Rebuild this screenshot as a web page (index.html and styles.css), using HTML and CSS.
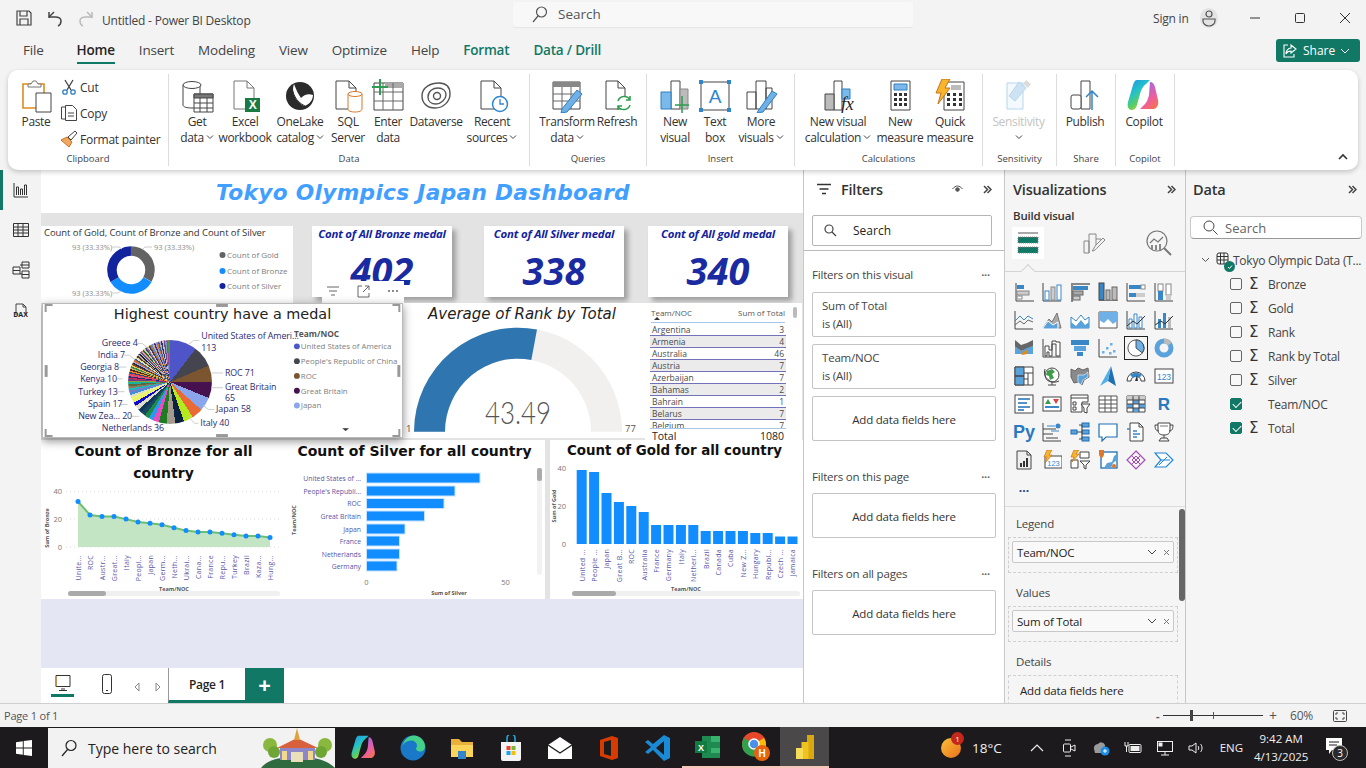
FILE: index.html
```html
<!DOCTYPE html>
<html lang="en">
<head>
  <meta charset="UTF-8">
  <title>Untitled - Power BI Desktop</title>
  <link rel="stylesheet" href="styles.css">
</head>
<body>
<div class="app">

  <header class="titlebar">
    <div class="quick">
      <svg width="18" height="18" viewBox="0 0 18 18" fill="none" stroke="#444" stroke-width="1.2"><path d="M2 2h12l2 2v12H2z"/><path d="M5 2v5h7V2M5 16v-6h8v6"/></svg>
      <svg width="18" height="18" viewBox="0 0 18 18" fill="none" stroke="#444" stroke-width="1.5"><path d="M3 9V3M3 8h6c4 0 6 2 6 4s-1 4-3 5"/><path d="M3 8l5-5" /></svg>
      <svg width="18" height="18" viewBox="0 0 18 18" fill="none" stroke="#bbb" stroke-width="1.5"><path d="M15 9V3M15 8H9c-4 0-6 2-6 4s1 4 3 5"/><path d="M15 8l-5-5"/></svg>
    </div>
    <div class="doc-title">Untitled - Power BI Desktop</div>
    <div class="top-search">
      <svg width="18" height="18" viewBox="0 0 18 18" fill="none" stroke="#555" stroke-width="1.2"><circle cx="10.5" cy="7" r="5"/><path d="M7 11l-5 6"/></svg>
      <span>Search</span>
    </div>
    <div class="signin">Sign in</div>
    <div class="avatar"><svg width="16" height="18" viewBox="0 0 16 18" fill="none" stroke="#555" stroke-width="1.2"><circle cx="8" cy="5" r="3"/><path d="M2 10h12v2a6 5 0 0 1-12 0z"/></svg></div>
    <div class="winctl">
      <svg width="12" height="12" viewBox="0 0 12 12" stroke="#333"><path d="M1 6h10"/></svg>
      <svg width="12" height="12" viewBox="0 0 12 12" fill="none" stroke="#333"><rect x="1.5" y="1.5" width="9" height="9" rx="1"/></svg>
      <svg width="12" height="12" viewBox="0 0 12 12" stroke="#333"><path d="M1 1l10 10M11 1L1 11"/></svg>
    </div>
  </header>

  <nav class="tabs">
    <a class="tab">File</a>
    <a class="tab active">Home</a>
    <a class="tab">Insert</a>
    <a class="tab">Modeling</a>
    <a class="tab">View</a>
    <a class="tab">Optimize</a>
    <a class="tab">Help</a>
    <a class="tab ctx">Format</a>
    <a class="tab ctx">Data / Drill</a>
    <button class="share">
      <svg width="16" height="16" viewBox="0 0 16 16" fill="none" stroke="#fff" stroke-width="1.1"><path d="M6 2H2v12h10v-3"/><path d="M9 2l5 4-5 4V8c-2 0-4 1-5 3 0-3 2-6 5-6z"/></svg>
      Share
      <svg width="10" height="10" viewBox="0 0 10 10" fill="none" stroke="#fff"><path d="M1 3l4 4 4-4"/></svg>
    </button>
  </nav>

  <section class="ribbon">
    <div class="group g-clip">
      <div class="clip-items">
        <div class="rb paste">
          <svg width="34" height="34" viewBox="0 0 34 34"><path d="M4 5h21v24H4z" fill="#fff" stroke="#e08a1e" stroke-width="1.6"/><path d="M9 5h3l2-3h3l2 3h3v3H9z" fill="#fff" stroke="#777"/><path d="M17 14h15v19H17z" fill="#fff" stroke="#444"/></svg>
          <span>Paste</span>
        </div>
        <ul class="clip-list">
          <li><svg width="18" height="18" viewBox="0 0 18 18" fill="none"><path d="M5 2l6 10M13 2L7 12" stroke="#444" stroke-width="1.3"/><circle cx="5" cy="14" r="2.2" stroke="#2f7fc1" stroke-width="1.3"/><circle cx="13" cy="14" r="2.2" stroke="#2f7fc1" stroke-width="1.3"/></svg>Cut</li>
          <li><svg width="18" height="18" viewBox="0 0 18 18" fill="#fff" stroke="#444"><path d="M1.5 3h5v12h-5z"/><path d="M5.500 1.500h7l4 4v11h-11z"/><path d="M8 9h6M8 12h6"/></svg>Copy</li>
          <li><svg width="18" height="18" viewBox="0 0 18 18"><path d="M1 10l6-3 5 5-3 5z" fill="#f0a860" stroke="#c8701e"/><path d="M8 7l7-6 2 2-6 7z" fill="#fff" stroke="#444"/></svg>Format painter</li>
        </ul>
      </div>
      <div class="group-name">Clipboard</div>
    </div>

    <div class="group g-data">
      <div class="items">
        <div class="rb">
          <svg width="34" height="34" viewBox="0 0 34 34" fill="#fff" stroke="#444"><path d="M3 6v20c0 2 4 3 9 3s8-1 8-2V6"/><ellipse cx="12" cy="6" rx="9" ry="3.500"/><path d="M14 15h19v18H14z"/><path d="M14 15h19v4H14z" fill="#777"/><path d="M20 19v14M27 19v14M14 24h19M14 29h19"/></svg>
          <span>Get</span><span>data<svg class="chev" viewBox="0 0 8 8"><path d="M1 2.500l3 3 3-3"/></svg></span>
        </div>
        <div class="rb">
          <svg width="34" height="34" viewBox="0 0 34 34"><path d="M6 2h13l7 7v21H6z" fill="#fff" stroke="#777"/><path d="M19 2v7h7" fill="none" stroke="#777"/><path d="M17 19h15v14H17z" fill="#1a7a43"/><text x="24.500" y="30" class="ico-x">X</text></svg>
          <span>Excel</span><span>workbook</span>
        </div>
        <div class="rb">
          <svg width="34" height="34" viewBox="0 0 34 34"><circle cx="17" cy="17" r="14" fill="#2b2b2b"/><path d="M11 5c-3 8 1 17 10 22 5-1 9-6 9-11-5-2-9 0-12 3-3-4-5-9-7-14z" fill="#fff"/><path d="M9 6c0 8 4 17 13 21" fill="none" stroke="#2b2b2b"/></svg>
          <span>OneLake</span><span>catalog<svg class="chev" viewBox="0 0 8 8"><path d="M1 2.500l3 3 3-3"/></svg></span>
        </div>
        <div class="rb">
          <svg width="34" height="34" viewBox="0 0 34 34"><path d="M5 2h13l7 7v21H5z" fill="#fff" stroke="#444"/><path d="M18 2v7h7" fill="none" stroke="#444"/><path d="M17 15v15c0 2 3 3 7 3s7-1 7-3V15z" fill="#fff" stroke="#d9772a"/><ellipse cx="24" cy="15" rx="7" ry="2.500" fill="#fff" stroke="#d9772a"/></svg>
          <span>SQL</span><span>Server</span>
        </div>
        <div class="rb">
          <svg width="34" height="34" viewBox="0 0 34 34"><path d="M3 4h29v27H3z" fill="#fff" stroke="#444"/><path d="M14 4h18v5H14z" fill="#aaa"/><path d="M12 4v27M22 4v27M3 13h29M3 22h29" stroke="#666" fill="none"/><path d="M9 0v16M1 8h16" stroke="#2f9d4f" stroke-width="2"/></svg>
          <span>Enter</span><span>data</span>
        </div>
        <div class="rb">
          <svg width="34" height="34" viewBox="0 0 34 34" fill="none" stroke="#555" stroke-width="1.400"><path d="M3 17C3 8 12 4 20 4c7 0 11 4 11 11s-6 14-15 14C8 29 3 24 3 17z"/><path d="M9 18c0-6 5-9 10-9s8 3 8 7-5 9-10 9-8-3-8-7z"/><circle cx="18" cy="17" r="3.500"/></svg>
          <span>Dataverse</span>
        </div>
        <div class="rb">
          <svg width="34" height="34" viewBox="0 0 34 34"><path d="M6 2h13l7 7v21H6z" fill="#fff" stroke="#444"/><path d="M19 2v7h7" fill="none" stroke="#444"/><circle cx="25" cy="25" r="7.500" fill="#fff" stroke="#2f86cf" stroke-width="1.500"/><path d="M25 20v5h4" fill="none" stroke="#2f86cf" stroke-width="1.300"/></svg>
          <span>Recent</span><span>sources<svg class="chev" viewBox="0 0 8 8"><path d="M1 2.500l3 3 3-3"/></svg></span>
        </div>
      </div>
      <div class="group-name">Data</div>
    </div>

    <div class="group g-query">
      <div class="items">
        <div class="rb">
          <svg width="34" height="34" viewBox="0 0 34 34"><path d="M3 3h27v27H3z" fill="#fff" stroke="#444"/><path d="M3 3h27v5H3z" fill="#888"/><path d="M12 8v22M21 8v22M3 15h27M3 22h27" stroke="#666" fill="none"/><path d="M12 30L27 11l5 4-15 18-6 1z" fill="#6fb0e6" stroke="#2f7fc1"/></svg>
          <span>Transform</span><span>data<svg class="chev" viewBox="0 0 8 8"><path d="M1 2.500l3 3 3-3"/></svg></span>
        </div>
        <div class="rb">
          <svg width="34" height="34" viewBox="0 0 34 34"><path d="M6 2h12l7 7v21H6z" fill="#fff" stroke="#444"/><path d="M18 2v7h7" fill="none" stroke="#444"/><circle cx="24" cy="24" r="7" fill="#fff" stroke="none"/><path d="M18 22a6.500 6.500 0 0 1 12-1M30 26a6.500 6.500 0 0 1-12 1M30 17v4h-4M18 31v-4h4" fill="none" stroke="#2f9d4f" stroke-width="1.500"/></svg>
          <span>Refresh</span>
        </div>
      </div>
      <div class="group-name">Queries</div>
    </div>

    <div class="group g-insert">
      <div class="items">
        <div class="rb">
          <svg width="34" height="34" viewBox="0 0 34 34"><path d="M13 2h9v28h-9z" fill="#fff" stroke="#444"/><path d="M3 13h10v17H3z" fill="#7db8ea" stroke="#2f7fc1"/><path d="M22 10h8v20h-8z" fill="#bbb" stroke="#888"/><path d="M24 17v17M17 26h14" stroke="#2f9d4f" stroke-width="1.500"/></svg>
          <span>New</span><span>visual</span>
        </div>
        <div class="rb">
          <svg width="34" height="34" viewBox="0 0 34 34"><path d="M3 3h28v28H3z" fill="#fff" stroke="#444"/><g fill="#2f86cf"><rect x="1" y="1" width="4" height="4"/><rect x="29" y="1" width="4" height="4"/><rect x="1" y="29" width="4" height="4"/><rect x="29" y="29" width="4" height="4"/></g><text x="17" y="24" class="ico-a">A</text></svg>
          <span>Text</span><span>box</span>
        </div>
        <div class="rb">
          <svg width="34" height="34" viewBox="0 0 34 34"><path d="M12 2h10v28H12zM3 13h9v17H3zM22 9h6v21h-6z" fill="#fff" stroke="#444"/><path d="M14 32l14-20 5 3-14 18-6 1z" fill="#6fb0e6" stroke="#2f7fc1"/></svg>
          <span>More</span><span>visuals<svg class="chev" viewBox="0 0 8 8"><path d="M1 2.500l3 3 3-3"/></svg></span>
        </div>
      </div>
      <div class="group-name">Insert</div>
    </div>

    <div class="group g-calc">
      <div class="items">
        <div class="rb">
          <svg width="34" height="34" viewBox="0 0 34 34"><path d="M13 2h8v29h-8z" fill="#fff" stroke="#444"/><path d="M21 10h8v10h-8z" fill="#7db8ea" stroke="#2f7fc1"/><path d="M4 15h9v16H4z" fill="#bbb" stroke="#444"/><text x="20" y="31" class="ico-fx">fx</text></svg>
          <span>New visual</span><span>calculation<svg class="chev" viewBox="0 0 8 8"><path d="M1 2.500l3 3 3-3"/></svg></span>
        </div>
        <div class="rb">
          <svg width="34" height="34" viewBox="0 0 34 34"><path d="M8 2h19v29H8z" fill="#fff" stroke="#444"/><path d="M11 5h13v6H11z" fill="#7db8ea" stroke="#2f7fc1"/><g fill="#333"><rect x="11" y="14" width="3" height="3"/><rect x="16" y="14" width="3" height="3"/><rect x="21" y="14" width="3" height="3"/><rect x="11" y="19" width="3" height="3"/><rect x="16" y="19" width="3" height="3"/><rect x="21" y="19" width="3" height="3"/><rect x="11" y="24" width="3" height="3"/><rect x="16" y="24" width="3" height="3"/><rect x="21" y="24" width="3" height="3"/></g></svg>
          <span>New</span><span>measure</span>
        </div>
        <div class="rb">
          <svg width="34" height="34" viewBox="0 0 34 34"><path d="M11 3h20v28H11z" fill="#fff" stroke="#444"/><path d="M18 6h10v5H18z" fill="#bbb"/><g fill="#333"><rect x="14" y="14" width="3" height="3"/><rect x="20" y="14" width="3" height="3"/><rect x="26" y="14" width="3" height="3"/><rect x="14" y="19" width="3" height="3"/><rect x="20" y="19" width="3" height="3"/><rect x="26" y="19" width="3" height="3"/><rect x="14" y="24" width="3" height="3"/><rect x="20" y="24" width="3" height="3"/><rect x="26" y="24" width="3" height="3"/></g><path d="M9 0h8l-5 9h5L5 25l3-11H3z" fill="#f7b52b" stroke="#c8701e"/></svg>
          <span>Quick</span><span>measure</span>
        </div>
      </div>
      <div class="group-name">Calculations</div>
    </div>

    <div class="group g-sens">
      <div class="items">
        <div class="rb off">
          <svg width="34" height="34" viewBox="0 0 34 34"><path d="M6 4h16v26H6z" fill="#f4f9fd" stroke="#b5d6ee"/><path d="M18 3l7 6-11 13-6-5z" fill="#cde3f3" stroke="#b5d6ee"/><path d="M25 1l5 4-3 4-5-4z" fill="#dcdcdc"/></svg>
          <span>Sensitivity</span><span><svg class="chev" viewBox="0 0 8 8"><path d="M1 2.500l3 3 3-3"/></svg></span>
        </div>
      </div>
      <div class="group-name">Sensitivity</div>
    </div>

    <div class="group g-share">
      <div class="items">
        <div class="rb">
          <svg width="34" height="34" viewBox="0 0 34 34"><path d="M13 2h9v28h-9z" fill="#fff" stroke="#444"/><rect x="3" y="16" width="10" height="14" rx="2" fill="#fff" stroke="#444"/><path d="M24 31V12M18 18l6-6 6 6" fill="none" stroke="#2f86cf" stroke-width="1.500"/></svg>
          <span>Publish</span>
        </div>
      </div>
      <div class="group-name">Share</div>
    </div>

    <div class="group g-copilot">
      <div class="items">
        <div class="rb">
          <svg width="34" height="34" viewBox="0 0 34 34"><defs><linearGradient id="cp1" x1="0" y1="0" x2=".6" y2="1"><stop offset="0" stop-color="#1f8fe8"/><stop offset=".45" stop-color="#25c2c8"/><stop offset=".75" stop-color="#5fcf5a"/><stop offset="1" stop-color="#f7d046"/></linearGradient><linearGradient id="cp2" x1=".4" y1="0" x2="1" y2="1"><stop offset="0" stop-color="#9a6be8"/><stop offset=".55" stop-color="#ee5e9c"/><stop offset="1" stop-color="#f77a3a"/></linearGradient></defs><path d="M10 1h13l-4 4c-3 2-5 6-6 10l-3 11c-1 4-3 5-6 5-3-1-4-4-3-8L6 6c1-3 2-5 4-5z" fill="url(#cp1)"/><path d="M23 3c3 0 4 2 5 5l3 13c1 5-1 8-4 9H13l5-5c2-2 3-5 4-9z" fill="url(#cp2)"/></svg>
          <span>Copilot</span>
        </div>
      </div>
      <div class="group-name">Copilot</div>
    </div>
    <svg class="collapse" width="10" height="8" viewBox="0 0 10 8" fill="none" stroke="#333" stroke-width="1.600"><path d="M1 6l4-4 4 4"/></svg>
  </section>

  <div class="workspace">
    <aside class="rail">
      <div class="rail-item current"><svg width="16" height="16" viewBox="0 0 16 16" fill="none" stroke="#333"><path d="M1 1v14h14M3.500 13V5h2v8M7.500 13V7h2v6M11.500 13V3h2v10"/></svg></div>
      <div class="rail-item"><svg width="18" height="16" viewBox="0 0 18 16" fill="none" stroke="#333"><path d="M1.500 1.500h15v13h-15zM1.500 5h15M1.500 8h15M1.500 11h15M6 1.500v13M11 1.500v13"/></svg></div>
      <div class="rail-item"><svg width="18" height="18" viewBox="0 0 18 18" fill="none" stroke="#333"><path d="M1 6h7v7H1zM1 9.500h7M10 1h7v6h-7zM10 4h7M10 10h7v7h-7zM10 13.500h7M8 4h2M8 13h2"/></svg></div>
      <div class="rail-item dax"><svg width="18" height="14" viewBox="0 0 18 14" fill="none" stroke="#444"><path d="M4 12V1h7l3 3v8"/><path d="M11 1v3h3"/></svg><span>DAX</span></div>
    </aside>

    <div class="report">
      <div class="canvas">
        <div class="v-band"></div>
        <div class="v-title">Tokyo Olympics Japan Dashboard</div>

        <div class="visual v-donut">
          <div class="v-donut-title">Count of Gold, Count of Bronze and Count of Silver</div>
          <svg class="fill-svg" viewBox="41 226 252 77">
            <circle cx="131" cy="270" r="19" fill="none" stroke="#636363" stroke-width="9.500" pathLength="360" stroke-dasharray="120 360" transform="rotate(-90 131 270)"/>
            <circle cx="131" cy="270" r="19" fill="none" stroke="#118dff" stroke-width="9.500" pathLength="360" stroke-dasharray="120 360" transform="rotate(30 131 270)"/>
            <circle cx="131" cy="270" r="19" fill="none" stroke="#12239e" stroke-width="9.500" pathLength="360" stroke-dasharray="120 360" transform="rotate(150 131 270)"/>
            <g class="t-lab"><text x="72" y="250">93 (33.33%)</text><text x="154" y="250">93 (33.33%)</text><text x="72" y="296">93 (33.33%)</text></g>
            <path d="M111 247h8l3 2M143 249l2-2h7M111 293h7l3-2" fill="none" stroke="#ccc"/>
            <circle cx="222.500" cy="255" r="3" fill="#636363"/><circle cx="222.500" cy="271" r="3" fill="#118dff"/><circle cx="222.500" cy="286" r="3" fill="#12239e"/>
            <g class="t-leg"><text x="227" y="258">Count of Gold</text><text x="227" y="274">Count of Bronze</text><text x="227" y="289">Count of Silver</text></g>
          </svg>
        </div>

        <div class="visual kpi k-bronze"><div class="kpi-title">Cont of All Bronze medal</div><div class="kpi-num">402</div></div>
        <div class="visual kpi k-silver"><div class="kpi-title">Cont of All Silver medal</div><div class="kpi-num">338</div></div>
        <div class="visual kpi k-gold"><div class="kpi-title">Cont of All gold medal</div><div class="kpi-num">340</div></div>

        <div class="vis-head">
          <svg width="14" height="10" viewBox="0 0 14 10" stroke="#666"><path d="M1 1h12M3 5h8M5 9h4"/></svg>
          <svg width="13" height="13" viewBox="0 0 13 13" fill="none" stroke="#666"><path d="M5 1H1v11h11V8M8 1h4v4M12 1L6 7"/></svg>
          <svg width="12" height="4" viewBox="0 0 12 4" fill="#666"><circle cx="2" cy="2" r="1"/><circle cx="6" cy="2" r="1"/><circle cx="10" cy="2" r="1"/></svg>
        </div>

        <div class="visual v-gauge">
          <div class="gauge-title">Average of Rank by Total</div>
          <svg class="fill-svg" viewBox="403 303 242 135">
            <path d="M414 431.700A104 104 0 0 1 622 431.700H591A73 73 0 0 0 445 431.700z" fill="#f1f0ef"/>
            <path d="M414 431.700A104 104 0 0 1 537 329.500L531.300 359.900A73 73 0 0 0 445 431.700z" fill="#2f75b0"/>
            <text x="518" y="424" textLength="66" lengthAdjust="spacingAndGlyphs" class="t-gauge">43.49</text>
            <text x="406" y="432" class="t-g-min">1</text>
            <text x="625" y="432" class="t-g-min">77</text>
          </svg>
        </div>

        <div class="visual v-table">
          <div class="tb-head"><span>Team/NOC</span><span>Sum of Total</span><i class="tb-sort"></i></div>
          <div class="tb-body">
            <div class="tb-row"><span>Argentina</span><span>3</span></div>
            <div class="tb-row alt"><span>Armenia</span><span>4</span></div>
            <div class="tb-row"><span>Australia</span><span>46</span></div>
            <div class="tb-row alt"><span>Austria</span><span>7</span></div>
            <div class="tb-row"><span>Azerbaijan</span><span>7</span></div>
            <div class="tb-row alt"><span>Bahamas</span><span>2</span></div>
            <div class="tb-row"><span>Bahrain</span><span>1</span></div>
            <div class="tb-row alt"><span>Belarus</span><span>7</span></div>
            <div class="tb-row"><span>Belgium</span><span>7</span></div>
          </div>
          <div class="tb-total"><span>Total</span><span>1080</span></div>
          <i class="tb-scroll"></i>
        </div>

        <div class="visual v-pie">
          <div class="pie-title">Highest country have a medal</div>
          <div class="pie"></div>
          <svg class="fill-svg" viewBox="42 303 361 135">
            <path d="M199 340h-6l-5 4M223 373h-11M223 388h-12M214 410h-6l-5-4M198 424h-4l-6-7M160 428h-4v-5M130 417h8M119 405h7M115 392h8M115 379h6M117 367h8M123 355h5l5 4M136 343h5l6 5" fill="none" stroke="#ccc"/>
            <g class="t-pie">
              <text x="201" y="339">United States of Ameri...</text><text x="201" y="351">113</text>
              <text x="225" y="376">ROC 71</text><text x="225" y="390">Great Britain</text><text x="225" y="401">65</text>
              <text x="216" y="413">Japan 58</text><text x="200" y="427">Italy 40</text><text x="100" y="432">Netherlands 36</text>
              <text x="76" y="420">New Zea... 20</text><text x="86" y="408">Spain 17</text><text x="76" y="395">Turkey 13</text>
              <text x="78" y="382">Kenya 10</text><text x="78" y="370">Georgia 8</text><text x="96" y="358">India 7</text><text x="100" y="346">Greece 4</text>
            </g>
            <text x="295" y="336" class="t-pie-head">Team/NOC</text>
            <circle cx="298" cy="346" r="3" fill="#4e55c8"/><circle cx="298" cy="361" r="3" fill="#44454f"/><circle cx="298" cy="376" r="3" fill="#7a5530"/><circle cx="298" cy="391" r="3" fill="#45114f"/><circle cx="298" cy="406" r="3" fill="#8aa5ec"/>
            <g class="t-leg"><text x="302" y="349">United States of America</text><text x="302" y="364">People's Republic of China</text><text x="302" y="379">ROC</text><text x="302" y="394">Great Britain</text><text x="302" y="409">Japan</text></g>
            <path d="M344 429h7l-3.500 3z" fill="#333"/>
            <g fill="#999"><path d="M42 303h8v2h-6v6h-2zM403 303h-8v2h6v6h2zM42 438h8v-2h-6v-6h-2zM403 438h-8v-2h6v-6h2z"/><rect x="216" y="303" width="12" height="3"/><rect x="216" y="435" width="12" height="3"/><rect x="42" y="365" width="3" height="12"/><rect x="400" y="365" width="3" height="12"/></g>
          </svg>
        </div>

        <div class="visual v-bronze">
          <div class="bt">Count of Bronze for all country</div>
          <svg class="fill-svg" viewBox="41 440 249 159">
            <path d="M66 491.700h216M66 519h216M66 547h216" stroke="#ddd" stroke-dasharray="1 3"/>
            <path d="M78 547V501.500L90 515l12 1.500 12 0 12 2.600 12 2.900 12 1.300 12 1.500 12 3 12 2.800 12 1.300 12 0 12 1.400 12 1.400 12 1.300 12 0 12 1.400V547z" fill="#c4e5c4"/>
            <path d="M78 501.500L90 515l12 1.500 12 0 12 2.600 12 2.900 12 1.300 12 1.500 12 3 12 2.800 12 1.300 12 0 12 1.400 12 1.400 12 1.300 12 0 12 1.400" fill="none" stroke="#6dbf6d" stroke-width="2"/>
            <g fill="#118dff"><circle cx="78" cy="501.500" r="2.500"/><circle cx="90" cy="515" r="2.500"/><circle cx="102" cy="516.500" r="2.500"/><circle cx="114" cy="516.500" r="2.500"/><circle cx="126" cy="519.100" r="2.500"/><circle cx="138" cy="522" r="2.500"/><circle cx="150" cy="523.300" r="2.500"/><circle cx="162" cy="524.800" r="2.500"/><circle cx="174" cy="527.800" r="2.500"/><circle cx="186" cy="530.600" r="2.500"/><circle cx="198" cy="531.900" r="2.500"/><circle cx="210" cy="531.900" r="2.500"/><circle cx="222" cy="533.300" r="2.500"/><circle cx="234" cy="534.700" r="2.500"/><circle cx="246" cy="536" r="2.500"/><circle cx="258" cy="536" r="2.500"/><circle cx="270" cy="537.400" r="2.500"/></g>
            <g class="t-tick"><text x="62" y="494">40</text><text x="62" y="522">20</text><text x="62" y="550">0</text></g>
            <text transform="rotate(-90 49 528)" x="49" y="528" class="t-axis mid">Sum of Bronze</text>
            <g class="t-cat">
              <text transform="rotate(-90 81 555)" x="81" y="555">Unite...</text><text transform="rotate(-90 93 555)" x="93" y="555">ROC</text><text transform="rotate(-90 105 555)" x="105" y="555">Austr...</text><text transform="rotate(-90 117 555)" x="117" y="555">Great...</text><text transform="rotate(-90 129 555)" x="129" y="555">Italy</text><text transform="rotate(-90 141 555)" x="141" y="555">Peopl...</text><text transform="rotate(-90 153 555)" x="153" y="555">Japan</text><text transform="rotate(-90 165 555)" x="165" y="555">Germ...</text><text transform="rotate(-90 177 555)" x="177" y="555">Neth...</text><text transform="rotate(-90 189 555)" x="189" y="555">Ukrai...</text><text transform="rotate(-90 201 555)" x="201" y="555">Cana...</text><text transform="rotate(-90 213 555)" x="213" y="555">France</text><text transform="rotate(-90 225 555)" x="225" y="555">Repu...</text><text transform="rotate(-90 237 555)" x="237" y="555">Turkey</text><text transform="rotate(-90 249 555)" x="249" y="555">Brazil</text><text transform="rotate(-90 261 555)" x="261" y="555">Kaza...</text><text transform="rotate(-90 273 555)" x="273" y="555">Hung...</text>
            </g>
            <text x="174" y="591" class="t-axis mid">Team/NOC</text>
            <rect x="68" y="591" width="212" height="5" rx="2.500" fill="#f0f0f0"/><rect x="68" y="591" width="38" height="5" rx="2.500" fill="#aaa"/>
          </svg>
        </div>

        <div class="visual v-silver">
          <div class="bt">Count of Silver for all country</div>
          <svg class="fill-svg" viewBox="290 440 255 159">
            <g fill="#118dff" stroke="#c4e2ff"><rect x="366.500" y="473" width="113.500" height="10"/><rect x="366.500" y="486" width="88.500" height="10"/><rect x="366.500" y="498.500" width="77.500" height="10"/><rect x="366.500" y="511" width="58" height="10"/><rect x="366.500" y="524" width="38.500" height="10"/><rect x="366.500" y="536" width="33" height="10"/><rect x="366.500" y="549" width="33" height="10"/><rect x="366.500" y="561" width="30.500" height="10"/></g>
            <g class="t-scat"><text x="361" y="481">United States of ...</text><text x="361" y="494">People's Republi...</text><text x="361" y="506">ROC</text><text x="361" y="519">Great Britain</text><text x="361" y="532">Japan</text><text x="361" y="544">France</text><text x="361" y="557">Netherlands</text><text x="361" y="569">Germany</text></g>
            <text transform="rotate(-90 296 520)" x="296" y="520" class="t-axis mid">Team/NOC</text>
            <text x="366.500" y="585" class="t-tick2">0</text><text x="505.500" y="585" class="t-tick2">50</text>
            <text x="449" y="595" class="t-axis mid">Sum of Silver</text>
            <rect x="537" y="468" width="5" height="107" rx="2" fill="#f2f2f2"/><rect x="537" y="468" width="5" height="13" rx="2" fill="#aaa"/>
          </svg>
        </div>

        <div class="visual v-gold">
          <div class="bt">Count of Gold for all country</div>
          <svg class="fill-svg" viewBox="550 440 253 159">
            <g fill="#118dff"><rect x="576.700" y="470" width="10" height="74"/><rect x="589.100" y="472" width="10" height="72"/><rect x="601.500" y="493" width="10" height="51"/><rect x="613.900" y="502" width="10" height="42"/><rect x="626.300" y="506" width="10" height="38"/><rect x="638.700" y="512" width="10" height="32"/><rect x="651.100" y="525" width="10" height="19"/><rect x="663.500" y="525" width="10" height="19"/><rect x="675.900" y="525" width="10" height="19"/><rect x="688.300" y="525" width="10" height="19"/><rect x="700.700" y="531" width="10" height="13"/><rect x="713.100" y="531" width="10" height="13"/><rect x="725.500" y="531" width="10" height="13"/><rect x="737.900" y="531" width="10" height="13"/><rect x="750.300" y="533" width="10" height="11"/><rect x="762.700" y="533" width="10" height="11"/><rect x="775.100" y="536.500" width="10" height="7.500"/><rect x="787.500" y="536.500" width="10" height="7.500"/></g>
            <g class="t-tick"><text x="566" y="471">40</text><text x="566" y="509">20</text><text x="566" y="547">0</text></g>
            <text transform="rotate(-90 556 506)" x="556" y="506" class="t-axis mid">Sum of Gold</text>
            <g class="t-cat">
              <text transform="rotate(-90 585 549)" x="585" y="549">United ...</text><text transform="rotate(-90 597 549)" x="597" y="549">People ...</text><text transform="rotate(-90 609 549)" x="609" y="549">Japan</text><text transform="rotate(-90 622 549)" x="622" y="549">Great B...</text><text transform="rotate(-90 634 549)" x="634" y="549">ROC</text><text transform="rotate(-90 647 549)" x="647" y="549">Australia</text><text transform="rotate(-90 659 549)" x="659" y="549">France</text><text transform="rotate(-90 671 549)" x="671" y="549">Germany</text><text transform="rotate(-90 684 549)" x="684" y="549">Italy</text><text transform="rotate(-90 696 549)" x="696" y="549">Netherl...</text><text transform="rotate(-90 709 549)" x="709" y="549">Brazil</text><text transform="rotate(-90 721 549)" x="721" y="549">Canada</text><text transform="rotate(-90 733 549)" x="733" y="549">Cuba</text><text transform="rotate(-90 746 549)" x="746" y="549">New Z...</text><text transform="rotate(-90 758 549)" x="758" y="549">Hungary</text><text transform="rotate(-90 771 549)" x="771" y="549">Republ...</text><text transform="rotate(-90 783 549)" x="783" y="549">Czech ...</text><text transform="rotate(-90 795 549)" x="795" y="549">Jamaica</text>
            </g>
            <text x="686" y="591" class="t-axis mid">Team/NOC</text>
            <rect x="572" y="591" width="228" height="5" rx="2.500" fill="#f0f0f0"/><rect x="572" y="591" width="44" height="5" rx="2.500" fill="#aaa"/>
          </svg>
        </div>
      </div>

      <div class="pagebar">
        <div class="pb-view">
          <svg width="18" height="18" viewBox="0 0 18 18" fill="none" stroke="#333"><path d="M2 1.500h14v11H2z"/><path d="M2 12.500V2" stroke="#e08a1e"/><path d="M7 15h4M5 16.500h8"/></svg>
        </div>
        <div class="pb-phone"><svg width="12" height="20" viewBox="0 0 12 20" fill="none" stroke="#333"><rect x="1.500" y=".5" width="9" height="19" rx="2"/><path d="M5 16.500h2"/></svg></div>
        <svg class="pb-arrow" width="6" height="10" viewBox="0 0 6 10" fill="none" stroke="#888"><path d="M5 1L1 5l4 4z"/></svg>
        <svg class="pb-arrow2" width="6" height="10" viewBox="0 0 6 10" fill="none" stroke="#888"><path d="M1 1l4 4-4 4z"/></svg>
        <div class="pb-tab">Page 1</div>
        <div class="pb-add">+</div>
      </div>
    </div>

    <aside class="filters">
      <div class="panel-head">
        <svg class="fl-ico" width="14" height="12" viewBox="0 0 14 12" stroke="#333" stroke-width="1.300"><path d="M0 1.500h14M2.500 6h9M5 10.500h4"/></svg>
        <span class="panel-title">Filters</span>
        <svg class="fl-eye" width="11" height="8" viewBox="0 0 11 8" fill="none" stroke="#555"><path d="M.5 4c3-4 7-4 10 0"/><circle cx="5.500" cy="4.500" r="1.800" fill="#555"/></svg>
        <svg class="dbl" width="9" height="9" viewBox="0 0 9 9" fill="none" stroke="#444" stroke-width="1.500"><path d="M1 1l3.500 3.500L1 8M4.500 1L8 4.500 4.500 8"/></svg>
      </div>
      <div class="fl-search">
        <svg width="13" height="13" viewBox="0 0 13 13" fill="none" stroke="#444" stroke-width="1.200"><circle cx="5" cy="5" r="4"/><path d="M8 8l4 4"/></svg>
        <span>Search</span>
      </div>
      <div class="fl-line"></div>
      <div class="fl-sec first"><span>Filters on this visual</span><b>...</b></div>
      <div class="fl-card"><div>Sum of Total</div><div>is (All)</div></div>
      <div class="fl-card"><div>Team/NOC</div><div>is (All)</div></div>
      <div class="fl-card add">Add data fields here</div>
      <div class="fl-sec"><span>Filters on this page</span><b>...</b></div>
      <div class="fl-card add">Add data fields here</div>
      <div class="fl-sec"><span>Filters on all pages</span><b>...</b></div>
      <div class="fl-card add">Add data fields here</div>
    </aside>

    <aside class="viz">
      <div class="panel-head">
        <span class="panel-title">Visualizations</span>
        <svg class="dbl" width="9" height="9" viewBox="0 0 9 9" fill="none" stroke="#444" stroke-width="1.500"><path d="M1 1l3.500 3.500L1 8M4.500 1L8 4.500 4.500 8"/></svg>
      </div>
      <div class="build">Build visual</div>
      <div class="viz-tabs">
        <div class="vt on"><svg width="24" height="24" viewBox="0 0 24 24"><path d="M2 2h20" stroke="#555"/><rect x="2" y="6" width="20" height="6" fill="#117865" stroke="#888" stroke-dasharray="1 1"/><rect x="2" y="16" width="20" height="6" fill="#117865" stroke="#888" stroke-dasharray="1 1"/></svg></div>
        <div class="vt fmt"><svg width="24" height="24" viewBox="0 0 24 24" fill="#f3f3f3" stroke="#888"><path d="M2 22V10h5v12zM7 22V3h7v12M14 8h5v3"/><path d="M10 20c3 0 4-2 6-4l7-7-2-2-7 7c-2 2-2 4-4 6z"/></svg></div>
        <div class="vt ana"><svg width="26" height="26" viewBox="0 0 26 26" fill="none" stroke="#777" stroke-width="1.200"><circle cx="11" cy="11" r="10"/><path d="M18 18l7 7" stroke-width="2"/><path d="M4 13l4-4 4 3 5-5"/><path d="M6 20v-5M10 20v-5M14 20v-6" stroke="#888" stroke-width="2"/></svg></div>
      </div>
      <div class="viz-line"></div>
      <div class="viz-grid">
        <svg viewBox="0 0 20 20" class="vi"><path d="M2 1v18h18" fill="none" stroke="#444"/><rect x="3" y="3" width="7" height="4" fill="#3a87c8"/><rect x="3" y="9" width="12" height="4" fill="#ccc" stroke="#888"/><rect x="3" y="14" width="5" height="3" fill="#fff" stroke="#888"/></svg>
        <svg viewBox="0 0 20 20" class="vi"><path d="M1 1v18h18" fill="none" stroke="#444"/><rect x="3" y="9" width="4" height="9" fill="#fff" stroke="#3a87c8"/><rect x="9" y="5" width="4" height="13" fill="#ccc" stroke="#888"/><rect x="15" y="3" width="4" height="15" fill="#fff" stroke="#3a87c8"/></svg>
        <svg viewBox="0 0 20 20" class="vi"><path d="M1 1h19v2H3v17H1z" fill="#888"/><rect x="3" y="4" width="15" height="4" fill="#3a87c8"/><rect x="3" y="9" width="10" height="4" fill="#aaa" stroke="#666"/><rect x="3" y="14" width="7" height="4" fill="#ccc" stroke="#666"/></svg>
        <svg viewBox="0 0 20 20" class="vi"><path d="M1 19h19v-1H1z" fill="#888"/><rect x="1" y="1" width="5" height="17" fill="#3a87c8" stroke="#444"/><rect x="8" y="8" width="4" height="10" fill="#bbb" stroke="#666"/><rect x="14" y="5" width="5" height="13" fill="#bbb" stroke="#666"/></svg>
        <svg viewBox="0 0 20 20" class="vi"><path d="M1 1v18h18" fill="none" stroke="#444"/><rect x="3" y="3" width="12" height="4" fill="#3a87c8"/><rect x="15" y="3" width="4" height="4" fill="#fff" stroke="#888"/><rect x="3" y="11" width="7" height="4" fill="#3a87c8"/><rect x="10" y="11" width="9" height="4" fill="#ccc"/></svg>
        <svg viewBox="0 0 20 20" class="vi"><path d="M1 1v18h18" fill="none" stroke="#444"/><rect x="4" y="2" width="5" height="7" fill="#fff" stroke="#888"/><rect x="4" y="9" width="5" height="9" fill="#3a87c8"/><rect x="12" y="2" width="5" height="11" fill="#fff" stroke="#888"/><rect x="12" y="13" width="5" height="5" fill="#ccc"/></svg>

        <svg viewBox="0 0 20 20" class="vi"><path d="M1 1v18h18" fill="none" stroke="#444"/><path d="M1 11l5-5 4 4 4-4 5 3" fill="none" stroke="#3a87c8"/><path d="M1 15l5-4 4 3 4-4 5 2" fill="none" stroke="#666"/></svg>
        <svg viewBox="0 0 20 20" class="vi"><path d="M1 18l6-9 3 3 5-9 4 15z" fill="#aaa" stroke="#777"/><path d="M1 18l5-7 5 4 5-3v7H1z" fill="#5aa2dc" stroke="#fff"/></svg>
        <svg viewBox="0 0 20 20" class="vi"><path d="M1 18V7l5 4 5-6 4 5 4-3v11z" fill="#fff" stroke="#3a87c8"/><path d="M1 18v-6l5 4 5-6 4 5 4-3v6z" fill="#5aa2dc"/></svg>
        <svg viewBox="0 0 20 20" class="vi"><path d="M1 2h18v16H1z" fill="#fff" stroke="#555"/><path d="M1 2h18v9l-4 3-5-5-4 4-5-3z" fill="#6fb0e6"/></svg>
        <svg viewBox="0 0 20 20" class="vi"><path d="M1 1v18h18" fill="none" stroke="#444"/><path d="M3 9h3v9H3zM8 4h3v14H8zM13 7h3v11h-3z" fill="#fff" stroke="#3a87c8"/><path d="M1 16l6-5 4 3 8-8" fill="none" stroke="#333"/></svg>
        <svg viewBox="0 0 20 20" class="vi"><path d="M1 1v18h18" fill="none" stroke="#444"/><path d="M4 9h3v9H4z" fill="#3a87c8"/><path d="M9 3h3v15H9z" fill="#3a87c8"/><path d="M14 7h3v11h-3z" fill="#bbb"/><path d="M1 15l6-4 4 3 8-8" fill="none" stroke="#333"/></svg>

        <svg viewBox="0 0 20 20" class="vi"><path d="M1 2l6 5 6-2 6-3v6l-6 3-6 2-6-4z" fill="#666"/><path d="M1 8l6 5 6-3 6-2v8H1z" fill="#5aa2dc"/><path d="M5 10l3 5 6-4-1 5-5 1z" fill="#e08a1e"/></svg>
        <svg viewBox="0 0 20 20" class="vi"><path d="M1 1v18h18" fill="none" stroke="#444"/><path d="M3 18V8h4v4h3V3h4v1h4v14h-4V6h-4v12H7V14H5v4z" fill="#fff" stroke="#444"/></svg>
        <svg viewBox="0 0 20 20" class="vi"><path d="M1 2h18v5H1z" fill="#3a87c8"/><path d="M4 8h12v5H4z" fill="#5aa2dc"/><path d="M7 14h6v4H7z" fill="#3a87c8"/></svg>
        <svg viewBox="0 0 20 20" class="vi"><path d="M1 1v18h18" fill="none" stroke="#444"/><g fill="#6fb0e6"><rect x="4" y="13" width="2.500" height="2.500"/><rect x="8" y="9" width="2.500" height="2.500"/><rect x="12" y="5" width="2.500" height="2.500"/><rect x="15" y="12" width="2.500" height="2.500"/><rect x="11" y="14" width="2.500" height="2.500"/></g></svg>
        <div class="vi-sel"><svg viewBox="0 0 20 20" class="vi"><circle cx="10" cy="10" r="9" fill="#fff" stroke="#444"/><path d="M10 1a9 9 0 0 1 7 14.500L10 10z" fill="#6fb0e6" stroke="#444"/></svg></div>
        <svg viewBox="0 0 20 20" class="vi"><circle cx="10" cy="10" r="7" fill="none" stroke="#5aa2dc" stroke-width="5"/><path d="M10 3a7 7 0 0 1 6 3" fill="none" stroke="#bbb" stroke-width="5"/></svg>

        <svg viewBox="0 0 20 20" class="vi"><path d="M1 1h18v18H1z" fill="#fff" stroke="#444"/><path d="M1 1h9v9H1zM1 10h9v9H1z" fill="#5aa2dc" stroke="#444"/><path d="M10 7h9M14 7v12M10 13h4" stroke="#444"/></svg>
        <svg viewBox="0 0 20 20" class="vi"><circle cx="10" cy="9" r="7" fill="#fff" stroke="#444"/><path d="M5 5l5-2 3 3-3 2 2 4-4 2-1-4-3-1z" fill="#3d9d4a"/><path d="M10 16v3M6 19h8" stroke="#444"/><path d="M3 3a10 10 0 0 0 14 12" fill="none" stroke="#444"/></svg>
        <svg viewBox="0 0 20 20" class="vi"><path d="M1 3l4 2 3-3 5 2 5-2 1 9-5 3-2 5-4-3-4 1-3-6z" fill="#8a8a8a" stroke="#666"/><path d="M8 9h6l4-3v5l-5 3-2 5-3-3z" fill="#5aa2dc" stroke="#fff" stroke-width=".6"/></svg>
        <svg viewBox="0 0 20 20" class="vi"><path d="M13 0l5 20-8-5z" fill="#1f6fb2"/><path d="M13 0L2 20l8-5z" fill="#54aee8"/></svg>
        <svg viewBox="0 0 20 20" class="vi"><path d="M1 15a9 9 0 0 1 18 0h-4a5 5 0 0 0-10 0z" fill="#fff" stroke="#444"/><path d="M4 9a9 9 0 0 1 12 0l-3 3a5 5 0 0 0-6 0z" fill="#3a87c8"/><path d="M9 15l2-6 1 6z" fill="#333"/></svg>
        <svg viewBox="0 0 20 20" class="vi"><rect x="1" y="3" width="18" height="14" fill="#fff" stroke="#444"/><text x="10" y="14" class="ico-123">123</text></svg>

        <svg viewBox="0 0 20 20" class="vi"><rect x="1" y="1" width="18" height="18" fill="#fff" stroke="#444"/><path d="M4 5h12M4 9h9M4 13h12M4 16h6" stroke="#1f6fb2" stroke-width="1.500"/></svg>
        <svg viewBox="0 0 20 20" class="vi"><rect x="1" y="3" width="18" height="14" fill="#fff" stroke="#444"/><path d="M6 5l3 5H3z" fill="#3d9d4a"/><path d="M11 5h6l-3 5z" fill="#d44"/><path d="M3 13h14" stroke="#3a87c8" stroke-width="2"/></svg>
        <svg viewBox="0 0 20 20" class="vi"><path d="M1 1h17v7h-6v10H1z" fill="#fff" stroke="#444"/><path d="M1 4h17" stroke="#444"/><path d="M3 8h3v3H3zM3 13h3v3H3z" fill="#fff" stroke="#444"/><path d="M11 10h9l-3 4v5l-3-1v-4z" fill="#fff" stroke="#444"/></svg>
        <svg viewBox="0 0 20 20" class="vi"><path d="M1 2h18v16H1zM1 6h18M1 10h18M1 14h18M7 2v16M13 2v16" fill="#fff" stroke="#555"/></svg>
        <svg viewBox="0 0 20 20" class="vi"><path d="M1 2h18v16H1z" fill="#fff" stroke="#444"/><path d="M7 6h6v4H7zM13 10h6v4h-6zM1 10h6v4H1zM7 14h6v4H7z" fill="#5aa2dc"/><path d="M1 2h18v4H1z" fill="#ccc"/><path d="M1 6h18M1 10h18M1 14h18M7 2v16M13 2v16" stroke="#444" fill="none"/></svg>
        <svg viewBox="0 0 20 20" class="vi"><text x="10" y="16" class="ico-r">R</text></svg>

        <svg viewBox="0 0 24 20" class="vi py"><text x="12" y="16" class="ico-py">Py</text></svg>
        <svg viewBox="0 0 20 20" class="vi"><path d="M1 1v18h18M1 7h13M1 12h10M4 16h12" fill="none" stroke="#444"/><circle cx="16" cy="4" r="2.500" fill="#3a87c8"/><path d="M5 4h8M9 9h8" stroke="#3a87c8"/></svg>
        <svg viewBox="0 0 20 20" class="vi"><g fill="#5aa2dc" stroke="#1f6fb2"><rect x="1" y="8" width="6" height="4"/><rect x="12" y="1" width="7" height="4"/><rect x="12" y="8" width="7" height="4"/><rect x="12" y="15" width="7" height="4"/></g><path d="M7 10h5M9 3h3v14H9" fill="none" stroke="#444"/></svg>
        <svg viewBox="0 0 20 20" class="vi"><path d="M1 2h18v13H8l-4 4v-4H1z" fill="#fff" stroke="#1f6fb2" stroke-width="1.200"/></svg>
        <svg viewBox="0 0 20 20" class="vi"><path d="M4 1h9l4 4v14H4z" fill="#fff" stroke="#444"/><path d="M13 1v4h4" fill="none" stroke="#444"/><path d="M7 9h4M7 12h7M7 15h4M1 7h3" stroke="#3a87c8" stroke-width="1.300"/></svg>
        <svg viewBox="0 0 20 20" class="vi"><path d="M4 1h12v7c0 4-3 5-6 5s-6-1-6-5z" fill="#fff" stroke="#444"/><path d="M4 3H1c0 4 1 6 4 6M16 3h3c0 4-1 6-4 6M10 13v3M5 19h10l-2-3H7z" fill="none" stroke="#444"/><path d="M6 3h8v2H6z" fill="#bbb"/></svg>

        <svg viewBox="0 0 20 20" class="vi"><path d="M3 1h10l4 4v14H3z" fill="#eee" stroke="#444"/><path d="M13 1v4h4" fill="none" stroke="#444"/><path d="M6 13h2v4H6zM9 11h2v6H9zM12 8h2v9h-2z" fill="#333"/></svg>
        <svg viewBox="0 0 20 20" class="vi"><rect x="3" y="6" width="17" height="12" fill="#fff" stroke="#444"/><text x="11.500" y="16" class="ico-123 sm">123</text><path d="M5 0h5L7 5h3L3 13l2-6H2z" fill="#f7b52b" stroke="#c8701e" stroke-width=".7"/></svg>
        <svg viewBox="0 0 20 20" class="vi"><path d="M10 2h9v6h-9zM1 10h7v8H1z" fill="#fff" stroke="#444"/><path d="M10 11h10l-4 4v4l-2-1v-3z" fill="#fff" stroke="#444"/><path d="M4 0h5L6 4h3L2 12l2-5H1z" fill="#f7b52b" stroke="#c8701e" stroke-width=".7"/></svg>
        <svg viewBox="0 0 20 20" class="vi"><rect x="3" y="2" width="16" height="16" fill="#fff" stroke="#1f6fb2" stroke-width="1.300"/><path d="M6 18l3-5 5-1 2-6 3-2v6l-4 3-2 5z" fill="#5aa2dc"/><path d="M1 0h5v5l-2.500 4L1 5z" fill="#e0762a"/><circle cx="16" cy="16" r="2" fill="#e0762a"/></svg>
        <svg viewBox="0 0 20 20" class="vi"><path d="M10 1l9 9-9 9-9-9z" fill="none" stroke="#a44bb5" stroke-width="1.200"/><path d="M10 6l4 4-4 4-4-4zM5.500 5.500l9 9M14.500 5.500l-9 9" fill="none" stroke="#a44bb5"/></svg>
        <svg viewBox="0 0 20 20" class="vi"><path d="M1 3h11l7 7-7 7H1l6-7z" fill="#fff" stroke="#1f86d6" stroke-width="1.200"/><path d="M7 10h9M5 15l8-8" stroke="#1f86d6" fill="none"/></svg>

        <div class="vi-more">...</div>
      </div>
      <div class="viz-line2"></div>
      <div class="well-label">Legend</div>
      <div class="well"><div class="field"><span>Team/NOC</span><svg width="10" height="6" viewBox="0 0 10 6" fill="none" stroke="#444"><path d="M1 1l4 4 4-4"/></svg><svg class="x" width="7" height="7" viewBox="0 0 7 7" stroke="#777"><path d="M1 1l5 5M6 1L1 6"/></svg></div></div>
      <div class="well-label">Values</div>
      <div class="well"><div class="field"><span>Sum of Total</span><svg width="10" height="6" viewBox="0 0 10 6" fill="none" stroke="#444"><path d="M1 1l4 4 4-4"/></svg><svg class="x" width="7" height="7" viewBox="0 0 7 7" stroke="#777"><path d="M1 1l5 5M6 1L1 6"/></svg></div></div>
      <div class="well-label">Details</div>
      <div class="well last">Add data fields here</div>
      <i class="viz-scroll"></i>
    </aside>

    <aside class="data">
      <div class="panel-head">
        <span class="panel-title">Data</span>
        <svg class="dbl" width="9" height="9" viewBox="0 0 9 9" fill="none" stroke="#444" stroke-width="1.500"><path d="M1 1l3.500 3.500L1 8M4.500 1L8 4.500 4.500 8"/></svg>
      </div>
      <div class="dt-search">
        <svg width="15" height="15" viewBox="0 0 15 15" fill="none" stroke="#444"><circle cx="6" cy="6" r="5"/><path d="M10 10l4.500 4.500"/></svg>
        <span>Search</span>
      </div>
      <ul class="tree">
        <li class="tree-root">
          <svg width="9" height="6" viewBox="0 0 9 6" fill="none" stroke="#555"><path d="M1 1l3.500 3.500L8 1"/></svg>
          <span class="tbl-ico"><svg width="16" height="16" viewBox="0 0 16 16" fill="none" stroke="#333"><rect x="1" y="1" width="11" height="11" rx="2"/><path d="M1 4.500h11M1 8h11M4.500 1v11M8 1v11"/></svg><i class="tbl-ok"><svg width="6" height="6" viewBox="0 0 6 6" fill="none" stroke="#fff"><path d="M1 3l1.500 1.500L5 1.500"/></svg></i></span>
          <span>Tokyo Olympic Data (T...</span>
        </li>
        <li><i class="cb"></i><b class="sig">Σ</b>Bronze</li>
        <li><i class="cb"></i><b class="sig">Σ</b>Gold</li>
        <li><i class="cb"></i><b class="sig">Σ</b>Rank</li>
        <li><i class="cb"></i><b class="sig">Σ</b>Rank by Total</li>
        <li><i class="cb"></i><b class="sig">Σ</b>Silver</li>
        <li><i class="cb on"></i><b class="sig"></b>Team/NOC</li>
        <li><i class="cb on"></i><b class="sig">Σ</b>Total</li>
      </ul>
    </aside>
  </div>

  <footer class="status">
    <span>Page 1 of 1</span>
    <div class="zoomctl">
      <span class="z-minus">-</span>
      <div class="z-track"><i class="z-tick"></i><i class="z-thumb"></i></div>
      <span class="z-plus">+</span>
      <span class="z-val">60%</span>
      <svg width="14" height="12" viewBox="0 0 14 12" fill="none" stroke="#444"><rect x=".5" y=".5" width="13" height="11" rx="1"/><path d="M3 5V3h2M9 3h2v2M11 7v2H9M5 9H3V7"/></svg>
    </div>
  </footer>

  <footer class="taskbar">
    <div class="start"><svg width="16" height="16" viewBox="0 0 16 16" fill="#fff"><path d="M0 2.200l6.800-1v6.300H0zM7.700 1L16 0v7.500H7.700zM0 8.400h6.800v6.400L0 13.800zM7.700 8.400H16V16l-8.300-1.100z"/></svg></div>
    <div class="tb-search">
      <svg width="18" height="18" viewBox="0 0 18 18" fill="none" stroke="#222" stroke-width="1.200"><circle cx="11" cy="6.500" r="5"/><path d="M7.500 10.500L2 17"/></svg>
      <span>Type here to search</span>
      <svg class="castle" width="74" height="40" viewBox="0 0 74 40"><path d="M0 40c6-8 18-11 36-11s30 3 38 11z" fill="#2f6b3f"/><circle cx="9" cy="17" r="7" fill="#8ab83e"/><circle cx="13" cy="24" r="6" fill="#6fa535"/><circle cx="64" cy="17" r="7" fill="#8ab83e"/><circle cx="60" cy="24" r="6" fill="#6fa535"/><rect x="19" y="19" width="35" height="13" fill="#8d86c8"/><path d="M16 20l20-10 21 10z" fill="#d9603c"/><path d="M36 0l3 12h-6z" fill="#e0a33c"/><rect x="30" y="24" width="12" height="10" fill="#e9dfb8"/><rect x="21" y="23" width="5" height="9" fill="#f0d98a"/><rect x="47" y="23" width="5" height="9" fill="#f0d98a"/></svg>
    </div>
    <div class="tb-apps">
      <div class="app-ico"><svg width="26" height="26" viewBox="0 0 34 34"><path d="M10 1h13l-4 4c-3 2-5 6-6 10l-3 11c-1 4-3 5-6 5-3-1-4-4-3-8L6 6c1-3 2-5 4-5z" fill="url(#cp1)"/><path d="M23 3c3 0 4 2 5 5l3 13c1 5-1 8-4 9H13l5-5c2-2 3-5 4-9z" fill="url(#cp2)"/></svg></div>
      <div class="app-ico"><svg width="26" height="26" viewBox="0 0 26 26"><circle cx="13" cy="13" r="12.500" fill="#1a78c8"/><path d="M2 13C3 5 9 .5 14 .5c6 0 11 5 11 11 0 3-2 5-5 5-2 0-4-1-4-3 0-1 1-1 1-3 0-3-3-5-6-5-5 0-9 4-9 8z" fill="#45d08a"/></svg></div>
      <div class="app-ico"><svg width="24" height="22" viewBox="0 0 24 22"><path d="M1 2h8l3 3h11v15H1z" fill="#e8b13c"/><path d="M1 8h22v12H1z" fill="#fbd45a"/><rect x="8" y="14" width="8" height="8" fill="#2f86cf"/></svg></div>
      <div class="app-ico"><svg width="24" height="26" viewBox="0 0 24 26"><path d="M2 7h20v17a2 2 0 0 1-2 2H4a2 2 0 0 1-2-2z" fill="#f4f4f4"/><path d="M8 7V3a4 4 0 0 1 8 0v4" fill="none" stroke="#29a6d8" stroke-width="1.600"/><rect x="7.500" y="11" width="4" height="4" fill="#e8482a"/><rect x="12.500" y="11" width="4" height="4" fill="#7db53a"/><rect x="7.500" y="16" width="4" height="4" fill="#1ba3e8"/><rect x="12.500" y="16" width="4" height="4" fill="#fbbc05"/></svg></div>
      <div class="app-ico"><svg width="26" height="24" viewBox="0 0 26 24"><path d="M1 9L13 1l12 8v14H1z" fill="#fff"/><path d="M1 9l12 8 12-8" fill="none" stroke="#1c1c1c" stroke-width="1.400"/></svg></div>
      <div class="app-ico"><svg width="20" height="26" viewBox="0 0 20 26"><path d="M1 5l12-4 6 2v20l-6 2-12-4z" fill="#d83b01"/><path d="M5 7l7-2v16l-7-2z" fill="#1c1c1c"/></svg></div>
      <div class="app-ico"><svg width="26" height="28" viewBox="0 0 26 28"><path d="M19 1l6 3v20l-6 3L8 16l-5 4-3-2 6-5-6-5 3-2 5 4z" fill="#1a8ad4"/><path d="M19 7v14l-8-7z" fill="#1c1c1c"/></svg></div>
      <div class="app-ico run"><svg width="26" height="24" viewBox="0 0 26 24"><rect x="8" y="1" width="18" height="22" fill="#1f8a50"/><path d="M17 1h9v6h-9zM17 13h9v5h-9z" fill="#36b36c"/><rect x="1" y="6" width="12" height="12" fill="#107c41"/><text x="7" y="15.500" class="ico-x2">X</text></svg></div>
      <div class="app-ico run"><svg width="28" height="30" viewBox="0 0 28 30"><circle cx="12" cy="12" r="12" fill="#e8482a"/><path d="M12 12L22 6a12 12 0 0 1-4 17z" fill="#fbbc05"/><path d="M12 12L18 23A12 12 0 0 1 2 6z" fill="#30a24e"/><path d="M2 6a12 12 0 0 1 20 0H12z" fill="#e8482a"/><circle cx="12" cy="12" r="5" fill="#4a90e8" stroke="#fff" stroke-width="1.500"/><circle cx="20" cy="21" r="8" fill="#e8640c"/><text x="20" y="25" class="ico-h">H</text></svg></div>
      <div class="app-ico run cur"><svg width="20" height="26" viewBox="0 0 20 26"><rect x="12" y="1" width="7" height="24" fill="#d9a80e"/><rect x="6.500" y="8" width="7" height="17" fill="#efc21e"/><rect x="1" y="14" width="7" height="11" fill="#f7dc5a"/></svg></div>
    </div>
    <div class="weather">
      <span class="sun"><i>1</i></span>
      <span>18°C</span>
    </div>
    <div class="tray">
      <svg width="14" height="8" viewBox="0 0 14 8" fill="none" stroke="#eee" stroke-width="1.200"><path d="M1 7l6-6 6 6"/></svg>
      <svg width="14" height="18" viewBox="0 0 14 18" fill="none" stroke="#eee"><path d="M3 1h6M3 17h6"/><rect x="1.500" y="5" width="7" height="8" rx="1"/><path d="M9 8l4-2v6l-4-2"/></svg>
      <svg width="18" height="16" viewBox="0 0 18 16"><path d="M2 9a4 4 0 0 1 4-5 4 4 0 0 1 7 1l-1 8H3z" fill="#9a9a9a"/><circle cx="13" cy="11" r="4.500" fill="#1b8fe8"/><path d="M11 11h4M13 9v4" stroke="#fff"/></svg>
      <svg width="18" height="14" viewBox="0 0 18 14" fill="none" stroke="#eee"><rect x="5" y="3.500" width="12" height="8" rx="1"/><rect x="7" y="5.500" width="8" height="4" fill="#eee"/><path d="M1 1v4h3V1M2.500 5v6" /></svg>
      <svg width="18" height="16" viewBox="0 0 18 16" fill="none" stroke="#eee"><rect x="1.500" y="1.500" width="15" height="10"/><path d="M9 11.500V15M5 15h8"/><rect x="3" y="3" width="3" height="3" fill="#eee"/></svg>
      <svg width="16" height="14" viewBox="0 0 16 14" fill="none" stroke="#eee"><path d="M1 5h3l4-3v10L4 9H1z"/><path d="M10 5c1 1 1 3 0 4M12.500 3c2 2 2 6 0 8"/></svg>
      <span class="eng">ENG</span>
    </div>
    <div class="clock"><div>9:42 AM</div><div>4/13/2025</div></div>
    <div class="notif">
      <svg width="18" height="18" viewBox="0 0 18 18"><path d="M1 1h16v12H7l-3 4v-4H1z" fill="#fff"/><path d="M4 5h10M4 8h8" stroke="#1c1c1c"/></svg>
      <i>3</i>
    </div>
  </footer>
</div>
</body>
</html>
```

FILE: styles.css
```css
* {
  margin: 0;
  padding: 0;
  box-sizing: border-box;
}

html, body {
  width: 1366px;
  height: 768px;
  overflow: hidden;
}

body {
  font-family: "Open Sans", "Noto Sans", sans-serif;
  font-size: 12px;
  color: #252423;
  background-color: #f3f3f3;
}

ul { list-style: none; }
i { font-style: normal; }

.app {
  display: flex;
  flex-direction: column;
  width: 1366px;
  height: 768px;
}

/* title bar */
.titlebar {
  display: flex;
  align-items: center;
  height: 36px;
  flex-shrink: 0;
}

.quick {
  display: flex;
  gap: 13px;
  padding-left: 15px;
  width: 102px;
}

.doc-title {
  width: 411px;
  font-size: 12px;
  letter-spacing: -.2px;
  color: #444;
  padding-top: 4px;
}

.top-search {
  display: flex;
  align-items: center;
  gap: 9px;
  width: 400px;
  height: 25px;
  margin-top: -8px;
  padding-left: 18px;
  background-color: #f8f8f8;
  border-radius: 3px;
  font-size: 13.500px;
  color: #555;
  box-shadow: 0 1px 1px rgba(0,0,0,.06);
}

.signin {
  margin-left: 240px;
  width: 47px;
  font-size: 12px;
  letter-spacing: -.2px;
  color: #444;
}

.avatar {
  width: 18px;
  height: 20px;
  border-radius: 50%;
  background-color: #e3e3e3;
  display: flex;
  align-items: center;
  justify-content: center;
}

.winctl {
  display: flex;
  gap: 33px;
  margin-left: 31px;
}

/* tabs */
.tabs {
  display: flex;
  align-items: flex-start;
  height: 34px;
  padding-left: 23px;
  flex-shrink: 0;
  position: relative;
}

.tab {
  font-size: 13.500px;
  letter-spacing: -.2px;
  line-height: 28px;
  color: #444;
  margin-right: 24px;
  white-space: nowrap;
}

.tab:first-child { margin-right: 33px; }

.tab.active {
  font-weight: 600;
  color: #252423;
  border-bottom: 2px solid #117865;
  height: 28px;
}

.tab.ctx {
  font-weight: 600;
  color: #117865;
}

.share {
  display: flex;
  align-items: center;
  gap: 5px;
  position: absolute;
  right: 6px;
  top: 3px;
  width: 84px;
  height: 23px;
  padding-left: 6px;
  background-color: #117865;
  border: none;
  border-radius: 3px;
  color: white;
  font-family: inherit;
  font-size: 12px;
}

/* ribbon */
.ribbon {
  display: flex;
  position: relative;
  z-index: 3;
  height: 100px;
  margin: 0 8px;
  flex-shrink: 0;
  background-color: white;
  border-radius: 10px;
  box-shadow: 0 2px 5px rgba(0,0,0,.2);
}

.group {
  display: flex;
  flex-direction: column;
  padding-top: 5px;
  margin: 4px 0;
  border-right: 1px solid #dcdcdc;
}

.group-name {
  margin-top: auto;
  height: 14px;
  text-align: center;
  font-size: 9.500px;
  color: #444;
}

.items { display: grid; }

.rb {
  display: flex;
  flex-direction: column;
  align-items: center;
  font-size: 12px;
  letter-spacing: -.35px;
  line-height: 16px;
  white-space: nowrap;
  color: #333;
}

.rb svg:first-child { margin-bottom: 1px; }
.rb.off { color: #c4c4c4; }

.chev {
  width: 8px;
  height: 8px;
  margin-left: 2px;
  fill: none;
  stroke: #444;
}

.rb .chev { margin-bottom: 0; }

.g-clip { width: 161px; }
.g-data { width: 361px; }
.g-query { width: 117px; }
.g-insert { width: 148px; }
.g-calc { width: 188px; }
.g-sens { width: 74px; }
.g-share { width: 59px; }
.g-copilot { width: 59px; }

.g-data .items {
  padding-left: 4px;
  grid-template-columns: 48px 48px 62px 34px 46px 50px 62px;
}

.g-query .items {
  padding-left: 10px;
  grid-template-columns: 54px 46px;
}

.g-insert .items {
  padding-left: 5px;
  grid-template-columns: 46px 34px 58px;
}

.g-calc .items {
  padding-left: 7px;
  grid-template-columns: 72px 52px 48px;
}

.g-sens .items,
.g-share .items,
.g-copilot .items {
  justify-items: center;
  padding-right: 2px;
}

.clip-items {
  display: flex;
  height: 72px;
  padding-left: 12px;
}

.paste { width: 32px; }

.clip-list {
  margin-left: 8px;
  margin-top: -5px;
}

.clip-list li {
  display: flex;
  align-items: center;
  gap: 2px;
  height: 26px;
  letter-spacing: -.25px;
  color: #333;
}

.collapse {
  position: absolute;
  right: 10px;
  bottom: 9px;
}

.ico-x, .ico-x2, .ico-h {
  font-family: "Liberation Sans", sans-serif;
  font-weight: 700;
  font-size: 12px;
  fill: white;
  text-anchor: middle;
}

.ico-x2 { font-size: 9px; }
.ico-h { font-size: 10px; }

.ico-a {
  font-family: "Liberation Sans", sans-serif;
  font-size: 19px;
  fill: #2f86cf;
  text-anchor: middle;
}

.ico-fx {
  font-family: "Liberation Serif", serif;
  font-style: italic;
  font-size: 18px;
  fill: #222;
}

.ico-123 {
  font-family: "Liberation Sans", sans-serif;
  font-size: 8.500px;
  fill: #2f86cf;
  text-anchor: middle;
}

.ico-123.sm { font-size: 7.500px; }

.ico-r {
  font-family: "Liberation Sans", sans-serif;
  font-weight: 700;
  font-size: 17px;
  fill: #2a78bf;
  text-anchor: middle;
}

.ico-py {
  font-family: "Liberation Sans", sans-serif;
  font-weight: 700;
  font-size: 18px;
  fill: #2a78bf;
  text-anchor: middle;
}

/* workspace */
.workspace {
  display: flex;
  height: 533px;
  flex-shrink: 0;
}

.rail {
  width: 41px;
  flex-shrink: 0;
  background-color: #f3f3f3;
}

.rail-item {
  display: flex;
  flex-direction: column;
  align-items: center;
  justify-content: center;
  height: 40px;
}

.rail-item.current { border-left: 3px solid #117865; padding-right: 3px; }

.rail-item span {
  font-size: 7px;
  font-weight: 700;
  line-height: 6px;
  margin-top: -5px;
}

.report {
  display: flex;
  flex-direction: column;
  width: 762px;
  flex-shrink: 0;
}

/* the report page: visuals sit on it at free positions */
.canvas {
  position: relative;
  height: 498px;
  overflow: hidden;
  background-color: #e4e7f3;
}

.canvas::before {
  content: "";
  position: absolute;
  left: 0;
  top: 0;
  width: 762px;
  height: 43px;
  background-color: white;
}

.v-title {
  position: absolute;
  left: 2px;
  top: 0;
  width: 760px;
  height: 43px;
  padding-top: 10px;
  text-align: center;
  font-family: "DejaVu Sans", sans-serif;
  font-style: italic;
  font-weight: 700;
  font-size: 21.700px;
  letter-spacing: .3px;
  color: #41a0ff;
}

.v-band {
  position: absolute;
  left: 0;
  top: 43px;
  width: 762px;
  height: 386px;
  background-color: #e3e3e3;
}

.visual {
  position: absolute;
  background-color: white;
}

.fill-svg {
  position: absolute;
  left: 0;
  top: 0;
  width: 100%;
  height: 100%;
}

.v-donut { left: 0; top: 56px; width: 252px; height: 77px; }

.v-donut-title {
  position: absolute;
  left: 3px;
  top: 0;
  font-size: 9.500px;
  letter-spacing: -.06px;
  white-space: nowrap;
  color: #333;
  z-index: 1;
}

.t-lab { font-size: 7.500px; fill: #8c8c8c; }
.t-leg { font-size: 8px; fill: #808080; }

.kpi {
  width: 140px;
  height: 71px;
  text-align: center;
  box-shadow: 4px 4px 5px rgba(0,0,0,.3);
}

.k-bronze { left: 271px; top: 56px; }
.k-silver { left: 443px; top: 56px; }
.k-gold { left: 607px; top: 56px; }

.kpi-title {
  font-size: 11.400px;
  font-weight: 700;
  font-style: italic;
  letter-spacing: -.2px;
  line-height: 15px;
  color: #12239e;
}

.kpi-num {
  font-size: 38px;
  font-weight: 700;
  font-style: italic;
  line-height: 50px;
  margin-top: 4px;
  color: #1a2aa0;
}

.vis-head {
  position: absolute;
  left: 281px;
  top: 111px;
  width: 82px;
  height: 24px;
  z-index: 2;
  padding: 0 5px 4px 4px;
  display: flex;
  align-items: center;
  justify-content: space-between;
  background-color: white;
}

.v-gauge { left: 362px; top: 133px; width: 242px; height: 135px; }

.gauge-title {
  position: absolute;
  left: -2px;
  top: 2px;
  width: 100%;
  text-align: center;
  font-family: "DejaVu Sans", sans-serif;
  font-style: italic;
  font-size: 15px;
  color: #222;
}

.t-gauge {
  font-family: "Lato", sans-serif;
  font-weight: 300;
  font-size: 32px;
  fill: #555;
  text-anchor: middle;
}

.t-g-min { font-size: 9.500px; fill: #555; }

.v-table { left: 604px; top: 133px; width: 157px; height: 137px; }

.tb-head {
  display: flex;
  justify-content: space-between;
  height: 20px;
  margin: 0 6px 0 6px;
  padding-top: 4px;
  width: 134px;
  border-bottom: 1px solid #a8c6e8;
  font-size: 8px;
  color: #555;
  position: relative;
}

.tb-sort {
  position: absolute;
  left: 3px;
  top: 14px;
  border: 3px solid transparent;
  border-bottom-color: #333;
  border-top: 0;
}

.tb-body {
  height: 105px;
  overflow: hidden;
  padding-top: 1px;
}

.tb-row {
  display: flex;
  justify-content: space-between;
  width: 136px;
  margin-left: 5px;
  height: 12px;
  line-height: 11px;
  padding: 0 2px 0 2px;
  font-size: 8.500px;
  color: #4a4a4a;
  border-bottom: 1px solid #7272b8;
}

.tb-row.alt { background-color: #ebebeb; }

.tb-total {
  display: flex;
  justify-content: space-between;
  width: 136px;
  margin-left: 5px;
  padding: 1px 2px 0;
  border-top: 1px solid #a8c6e8;
  font-size: 10.500px;
  line-height: 13px;
}

.tb-scroll {
  position: absolute;
  right: 5px;
  top: 4px;
  width: 4px;
  height: 11px;
  border-radius: 2px;
  background-color: #bbb;
}

.v-pie {
  left: 1px;
  top: 133px;
  width: 361px;
  height: 135px;
  z-index: 2;
  box-shadow: 0 3px 9px rgba(0,0,0,.45);
  border: 1px solid #bbb;
}

.pie-title {
  position: absolute;
  left: 0;
  top: 2px;
  width: 100%;
  text-align: center;
  font-family: "DejaVu Sans", sans-serif;
  font-size: 14.400px;
  color: #222;
}

.pie {
  position: absolute;
  left: 85px;
  top: 36px;
  width: 84px;
  height: 84px;
  border-radius: 50%;
  background: conic-gradient(
    #4e55c8 0 37.7deg, #44454f 0 67deg, #7a5530 0 90.7deg, #45114f 0 112.4deg,
    #8aa5ec 0 131.7deg, #e96a34 0 147deg, #b5ea1e 0 160.3deg, #0b2340 0 172.6deg,
    #a59a8d 0 184.6deg, #1e7d20 0 195.6deg, #e84dc0 0 203.6deg, #2a9bec 0 210.6deg,
    #1e8a4a 0 217deg, #184a5e 0 223deg, #10365c 0 229deg, #e2ddc8 0 235deg,
    #0a0ad0 0 240deg, #eef06a 0 245deg, #e4f57a 0 249deg, #d8d8d8 0 252deg,
    #3f8fd6 0 255deg, #7a78c8 0 258deg, #1fb8c0 0 261deg, #8a7a5a 0 264deg,
    #5a6a3a 0 267deg, #18b0a0 0 270deg, #8aa83a 0 272deg, #6a3a8a 0 274deg,
    #c82a5a 0 276deg, #2a2a6a 0 278deg, #d84a8a 0 280deg, #e8484a 0 282deg,
    #1a4a8a 0 284deg, #f08a1a 0 286deg, #4a2a1a 0 288deg, #c8a85a 0 290deg,
    #2a8a5a 0 292deg, #e8c84a 0 294deg, #8a4a2a 0 296deg, #2a2a4a 0 298deg,
    #a8a8d8 0 300deg, #d86a2a 0 302deg, #3a6a9a 0 304deg, #e0e0b0 0 307deg,
    #5a3a1a 0 309deg, #b0b0b0 0 311deg, #1a1a3a 0 313deg, #d8c898 0 315deg,
    #5a5a9a 0 317deg, #e89a9a 0 319deg, #2a6a2a 0 321deg, #c8c8a8 0 323deg,
    #4a4a6a 0 325deg, #8a6aa8 0 327deg, #d8d0a0 0 329deg, #3a3a5a 0 331deg,
    #a86a4a 0 333deg, #6a8ac8 0 335deg, #c0b090 0 337deg, #4a2a6a 0 339deg,
    #9a9ad8 0 341deg, #c87a3a 0 343deg, #4a5a8a 0 345deg, #b0a8c8 0 347deg,
    #2a3a5a 0 349deg, #d0b8d0 0 351deg, #6a4a8a 0 353deg, #7a9ac0 0 355deg,
    #9a4a8a 0 357deg, #5a8a4a 0 360deg
  );
}

.t-pie { font-size: 9px; letter-spacing: -.1px; fill: #2b2b70; }
.t-pie-head { font-size: 8.500px; font-weight: 700; fill: #555; }

.v-bronze, .v-silver, .v-gold {
  top: 270px;
  height: 159px;
  overflow: hidden;
}

.v-bronze { left: 0; width: 249px; }
.v-silver { left: 249px; width: 255px; }
.v-gold { left: 509px; width: 253px; }

.bt {
  position: absolute;
  top: 0;
  width: 100%;
  text-align: center;
  font-family: "DejaVu Sans", sans-serif;
  font-weight: 700;
  font-size: 14px;
  line-height: 22px;
  color: #111;
  z-index: 1;
}

.v-bronze .bt { left: -2px; padding: 0 20px; }
.v-silver .bt { left: -3px; white-space: nowrap; }
.v-gold .bt { left: -2px; font-size: 13.400px; white-space: nowrap; }

.t-tick { font-size: 7.500px; fill: #777; text-anchor: end; }
.t-tick2 { font-size: 7.500px; fill: #777; text-anchor: middle; }
.t-axis { font-size: 5.500px; font-weight: 700; fill: #555; }
.mid { text-anchor: middle; }
.t-cat { font-size: 7px; fill: #5656a8; text-anchor: end; letter-spacing: .3px; }
.t-scat { font-size: 6.800px; fill: #5656a8; text-anchor: end; }

/* page tabs */
.pagebar {
  position: relative;
  display: flex;
  align-items: stretch;
  height: 35px;
  background-color: white;
}

.pb-view, .pb-phone {
  display: flex;
  justify-content: center;
  padding-top: 6px;
}

.pb-view {
  width: 23px;
  margin-left: 10px;
  height: 29px;
  border-bottom: 3px solid #117865;
}

.pb-phone { margin-left: 27px; width: 12px; }

.pb-arrow { margin: 14px 0 0 21px; }
.pb-arrow2 { margin: 14px 0 0 15px; }

.pb-tab {
  margin-left: 7px;
  width: 77px;
  border-left: 1px solid #999;
  border-bottom: 3px solid #117865;
  text-align: center;
  font-size: 12px;
  font-weight: 600;
  letter-spacing: -.3px;
  line-height: 34px;
}

.pb-add {
  width: 39px;
  background-color: #117865;
  color: white;
  font-size: 22px;
  font-weight: 700;
  text-align: center;
  line-height: 32px;
}

/* side panels */
.filters, .viz, .data {
  position: relative;
  height: 533px;
  flex-shrink: 0;
  overflow: hidden;
  border-left: 1px solid #c8c8c8;
}

.filters { width: 201px; background-color: white; }
.viz { width: 181px; background-color: #f5f5f5; }
.data { width: 181px; background-color: #f5f5f5; }

.panel-head {
  display: flex;
  align-items: center;
  height: 38px;
  padding-left: 7px;
  position: relative;
}

.viz .panel-head, .viz .build { padding-left: 8px; }

.panel-title {
  font-size: 14.500px;
  font-weight: 600;
  letter-spacing: -.2px;
  color: #333;
}

.dbl {
  position: absolute;
  right: 9px;
  top: 15px;
}

.filters .panel-head { padding-left: 13px; }
.filters .panel-title { margin-left: 10px; }
.filters .dbl { right: 12px; }

.fl-eye {
  position: absolute;
  left: 148px;
  top: 15px;
}

.fl-search {
  display: flex;
  align-items: center;
  gap: 16px;
  height: 31px;
  width: 180px;
  margin: 7px 0 0 8px;
  padding-left: 11px;
  border: 1px solid #b5b5b5;
  border-radius: 2px;
}

.fl-line {
  margin-top: 4px;
  border-bottom: 1px solid #bbb;
}

.fl-sec {
  display: flex;
  justify-content: space-between;
  height: 16px;
  line-height: 16px;
  margin: 28px 12px 8px 8px;
  letter-spacing: -.2px;
  font-size: 11.500px;
  color: #444;
}

.fl-sec.first { margin-top: 16px; margin-bottom: 9px; }

.fl-sec b {
  font-weight: 700;
  font-size: 11px;
  line-height: 10px;
  color: #666;
  margin-right: 2px;
}

.fl-card {
  height: 45px;
  width: 184px;
  margin: 0 0 7px 8px;
  padding: 4px 9px;
  border: 1px solid #c4c4c4;
  border-radius: 2px;
  line-height: 18px;
  letter-spacing: -.2px;
  font-size: 11.500px;
  color: #444;
}

.fl-card.add {
  display: flex;
  align-items: center;
  justify-content: center;
  padding: 3px 0 0;
  color: #333;
  margin-bottom: 0;
}

.build {
  height: 16px;
  font-size: 11.500px;
  font-weight: 600;
  letter-spacing: -.2px;
  line-height: 16px;
  color: #333;
}

.viz-tabs {
  display: flex;
  margin-top: 3px;
  height: 32px;
}

.vt {
  display: flex;
  align-items: center;
  justify-content: center;
  width: 32px;
  height: 32px;
}

.vt.on { margin-left: 7px; background-color: white; }
.vt.fmt { margin-left: 34px; }
.vt.ana { margin-left: 33px; }

.viz-line {
  margin-top: 12px;
  border-bottom: 1px solid #d4d4d4;
  position: relative;
}

.viz-line::after {
  content: "";
  position: absolute;
  left: 18px;
  top: -5px;
  width: 9px;
  height: 9px;
  background-color: #f5f5f5;
  border-left: 1px solid #d4d4d4;
  border-top: 1px solid #d4d4d4;
  transform: rotate(45deg);
}

.viz-grid {
  display: grid;
  grid-template-columns: repeat(6, 28px);
  grid-auto-rows: 28px;
  justify-items: center;
  align-items: center;
  margin: 6px 0 0 5px;
}

.vi { width: 20px; height: 20px; display: block; }
.vi.py { width: 24px; }

.vi-sel {
  padding: 2px;
  border: 1px solid #222;
  width: 24px;
  height: 24px;
}

.vi-sel .vi { width: 18px; height: 18px; }

.vi-more {
  font-weight: 700;
  font-size: 12px;
  line-height: 8px;
  color: #1f3f8a;
}

.viz-line2 {
  margin-top: 4px;
  border-bottom: 1px solid #dcdcdc;
}

.well-label {
  height: 16px;
  margin: 9px 0 5px 11px;
  line-height: 16px;
  letter-spacing: -.2px;
  font-size: 11.500px;
  color: #444;
}

.well {
  width: 170px;
  height: 36px;
  margin: 0 0 12px 3px;
  padding: 3px 3px;
  border: 1px dashed #cfcfcf;
}

.well.last {
  height: 30px;
  border-bottom: none;
  padding: 6px 0 0 11px;
  line-height: 18px;
  letter-spacing: -.2px;
  font-size: 11.500px;
}

.field {
  display: flex;
  align-items: center;
  gap: 6px;
  height: 22px;
  padding: 0 3px 0 4px;
  background-color: #f9f9f9;
  border: 1px solid #c8c8c8;
  border-radius: 2px;
  letter-spacing: -.2px;
  font-size: 11.500px;
}

.field span { flex: 1; }

.viz-scroll {
  position: absolute;
  right: 0;
  top: 339px;
  width: 6px;
  height: 92px;
  border-radius: 3px;
  background-color: #666;
}

.dt-search {
  display: flex;
  align-items: center;
  gap: 7px;
  width: 172px;
  height: 23px;
  margin: 8px 0 0 4px;
  padding-left: 12px;
  background-color: white;
  border: 1px solid #c8c8c8;
  border-bottom-color: #999;
  border-radius: 4px;
  font-size: 13px;
  color: #666;
}

.tree {
  margin-top: 9px;
  font-size: 12px;
  letter-spacing: -.25px;
  color: #444;
}

.tree li {
  display: flex;
  align-items: center;
  height: 24px;
  padding-left: 44px;
}

.tree .tree-root {
  padding-left: 15px;
  white-space: nowrap;
}

.tbl-ico {
  position: relative;
  margin: 0 1px 0 6px;
  display: block;
  width: 16px;
  height: 16px;
}

.tbl-ok {
  position: absolute;
  right: -3px;
  bottom: -4px;
  display: flex;
  align-items: center;
  justify-content: center;
  width: 11px;
  height: 11px;
  border-radius: 50%;
  background-color: #117865;
}

.cb {
  width: 12px;
  height: 12px;
  border: 1px solid #666;
  border-radius: 2px;
  background-color: #f8f8f8;
  margin-right: 7px;
  position: relative;
}

.cb.on {
  background-color: #117865;
  border-color: #117865;
}

.cb.on::after {
  content: "";
  position: absolute;
  left: 2px;
  top: 2px;
  width: 7px;
  height: 4px;
  border-left: 1px solid white;
  border-bottom: 1px solid white;
  transform: rotate(-45deg);
}

.sig {
  width: 19px;
  font-family: "DejaVu Sans", sans-serif;
  font-weight: 400;
  font-size: 15px;
  color: #333;
}

/* status bar */
.status {
  display: flex;
  align-items: center;
  justify-content: space-between;
  position: relative;
  height: 24px;
  flex-shrink: 0;
  padding-left: 4px;
  border-top: 1px solid #d0d0d0;
  font-size: 11px;
  letter-spacing: -.2px;
  color: #555;
}

.zoomctl {
  display: flex;
  align-items: center;
  padding-right: 19px;
}

.z-minus { width: 7px; font-weight: 700; }

.z-track {
  position: relative;
  width: 100px;
  height: 1px;
  background-color: #333;
}

.z-tick {
  position: absolute;
  left: 50px;
  top: -3px;
  width: 1px;
  height: 7px;
  background-color: #555;
}

.z-thumb {
  position: absolute;
  left: 27px;
  top: -5px;
  width: 3px;
  height: 11px;
  background-color: #444;
}

.z-plus { margin-left: 6px; font-size: 14px; width: 21px; }
.z-val { font-size: 12px; width: 43px; }

/* taskbar */
.taskbar {
  display: flex;
  align-items: center;
  height: 41px;
  flex-shrink: 0;
  background-color: #1c1a1c;
  color: #f0f0f0;
}

.start {
  display: flex;
  justify-content: center;
  width: 48px;
}

.tb-search {
  display: flex;
  align-items: center;
  position: relative;
  overflow: hidden;
  width: 287px;
  height: 40px;
  margin-top: 1px;
  padding-left: 12px;
  gap: 10px;
  background-color: #f2f2f2;
  color: #222;
  font-size: 14px;
}

.castle {
  position: absolute;
  right: 0;
  top: 0;
}

.tb-apps {
  display: flex;
  margin-left: 4px;
  height: 41px;
}

.app-ico {
  display: flex;
  align-items: center;
  justify-content: center;
  width: 49px;
  height: 41px;
}

.app-ico.run { border-bottom: 2px solid #f4c7b8; }
.app-ico.cur { background-color: #4b4849; }

.weather {
  display: flex;
  align-items: center;
  gap: 11px;
  margin-left: 112px;
  font-size: 13.500px;
}

.sun {
  position: relative;
  width: 20px;
  height: 20px;
  border-radius: 50%;
  background: linear-gradient(135deg, #f7c23a, #ee6f1a);
}

.sun i {
  position: absolute;
  right: -3px;
  top: -6px;
  width: 13px;
  height: 13px;
  border-radius: 50%;
  background-color: #c4271b;
  color: white;
  font-size: 8px;
  line-height: 13px;
  text-align: center;
}

.tray {
  display: flex;
  align-items: center;
  gap: 14px;
  margin-left: 28px;
}

.tray svg:nth-child(2) { margin-left: 4px; }
.tray svg:nth-child(3) { margin-left: 2px; }

.eng { margin-left: 2px; font-size: 11.500px; }

.clock {
  width: 80px;
  margin-left: -2px;
  text-align: center;
  font-size: 11.500px;
  line-height: 18px;
}

.notif {
  position: relative;
  margin-left: 4px;
}

.notif i {
  position: absolute;
  left: 7px;
  top: 8px;
  width: 16px;
  height: 16px;
  border-radius: 50%;
  border: 1px solid #bbb;
  background-color: #2a2a2a;
  color: white;
  font-size: 10px;
  text-align: center;
  line-height: 14px;
}
```
